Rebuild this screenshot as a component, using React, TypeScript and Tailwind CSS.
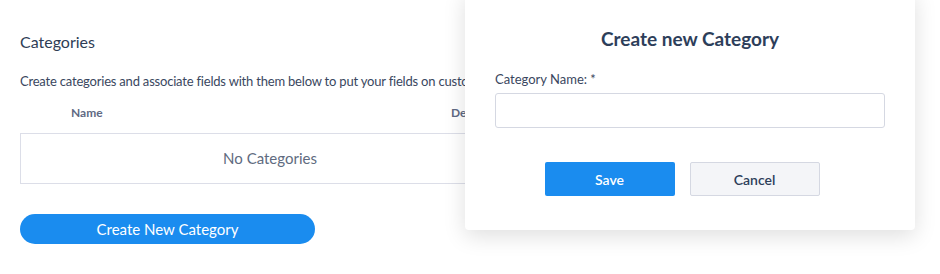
import React from "react";

function App() {
  return (
    <div className="relative w-[940px] h-[274px] bg-white overflow-hidden font-['Lato','Noto_Sans',sans-serif]">
      {/* Page content */}
      <div className="pl-5 pt-[32px]">
        <h2 className="text-[16px] leading-5 text-[#2e3d55]">Categories</h2>
        <div className="mt-[19px] w-[445px] overflow-hidden">
          <p className="text-[13px] leading-5 tracking-[-0.2px] text-[#3a4760] whitespace-nowrap">
            Create categories and associate fields with them below to put your fields on custom tabs
          </p>
        </div>
        <div className="flex mt-[14px] text-[12px] leading-4 font-bold text-[#5f6a84]">
          <div className="w-[431px] pl-[51px]">Name</div>
          <div className="w-[14px] overflow-hidden">De</div>
        </div>
        <div className="mt-[12px] w-[500px] h-[51px] border border-[#dcdee8] flex items-center justify-center text-[15px] text-[#606b80]">
          No Categories
        </div>
        <button className="mt-[30px] w-[295px] h-[30px] rounded-full bg-[#1a8cef] text-white text-[15px] leading-[30px]">
          Create New Category
        </button>
      </div>

      {/* Popover */}
      <div className="absolute left-[465px] top-[-10px] w-[450px] h-[240px] bg-white rounded-[4px] shadow-[0_6px_22px_rgba(0,0,0,0.13)] px-[30px] pt-[37px]">
        <h3 className="text-center text-[19px] leading-6 font-bold text-[#2d3e5a]">
          Create new Category
        </h3>
        <label className="block mt-[20px] text-[13px] leading-4 text-[#3a4760]">
          Category Name: *
        </label>
        <input
          type="text"
          className="mt-[6px] block w-[390px] h-[35px] border border-[#d5d8e2] rounded-[3px] outline-none"
        />
        <div className="flex justify-center gap-[15px] mt-[34px] pr-[16px]">
          <button className="w-[130px] h-[34px] rounded-[2px] bg-[#1a8cef] text-white text-[14px] font-semibold">
            Save
          </button>
          <button className="w-[130px] h-[34px] rounded-[2px] bg-[#f4f5f8] border border-[#d5d8e2] text-[#2d3e5a] text-[14px] font-semibold">
            Cancel
          </button>
        </div>
      </div>
    </div>
  );
}

export default App;
